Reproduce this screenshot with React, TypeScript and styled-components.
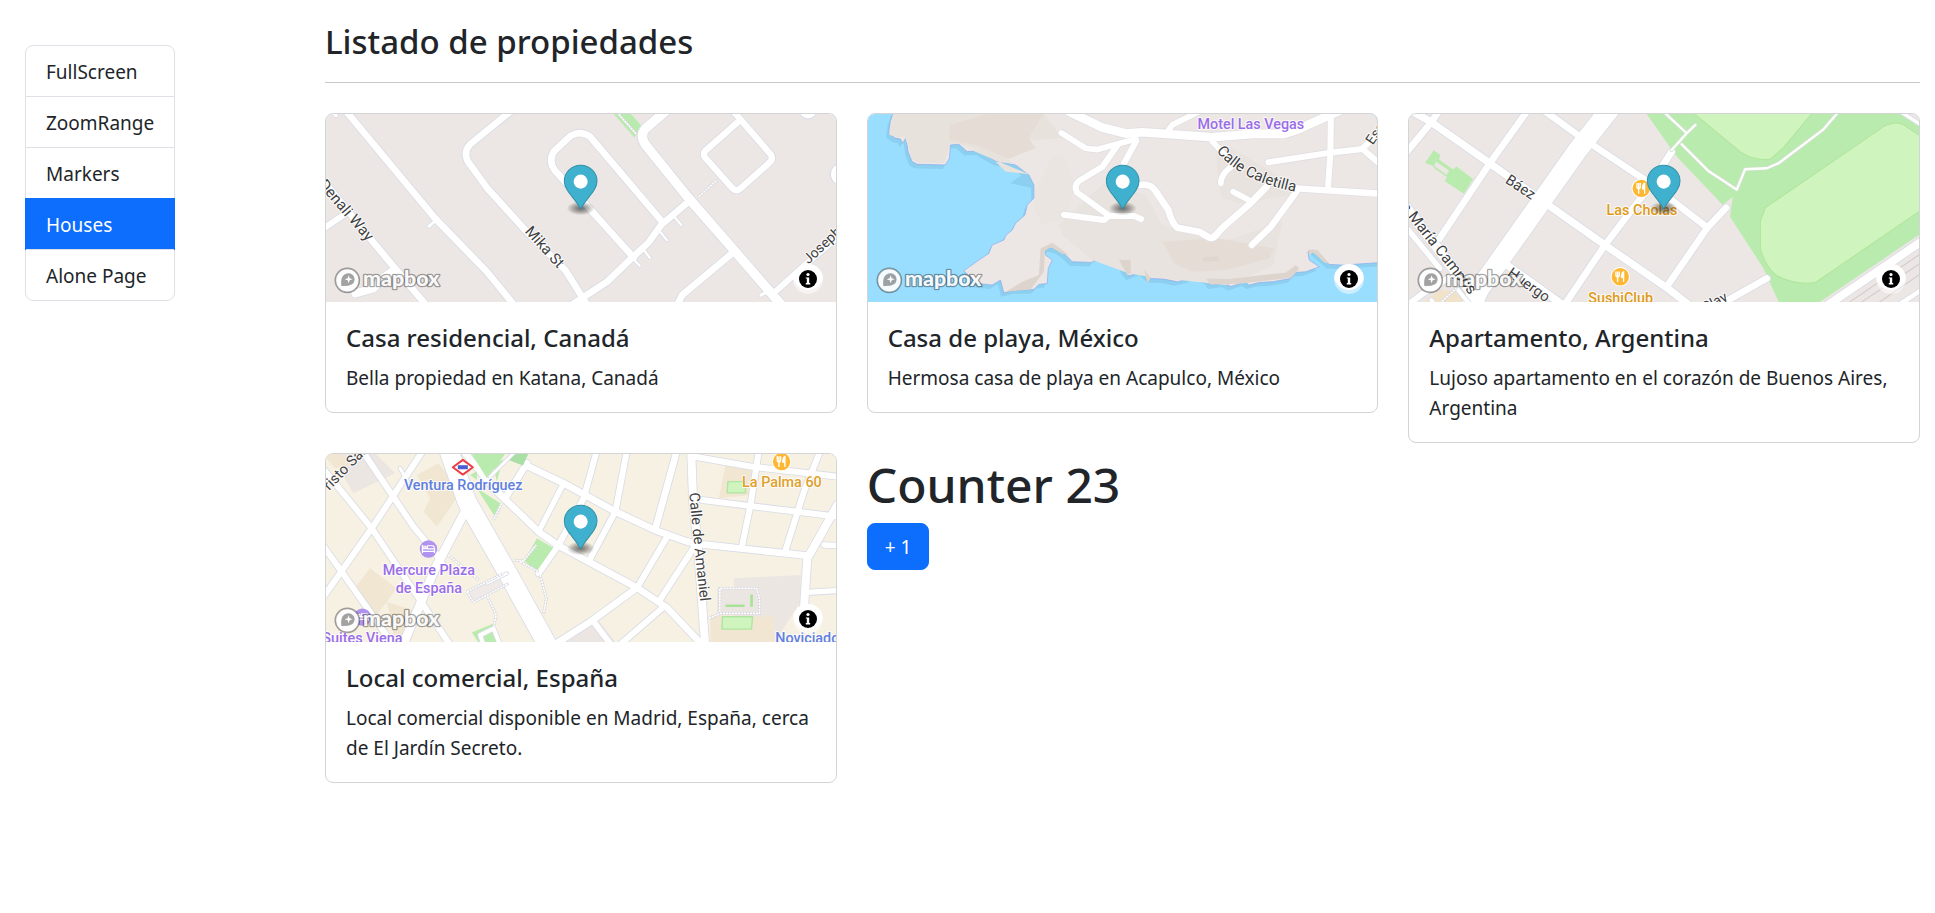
import React, { useState } from 'react';
import styled, { createGlobalStyle } from 'styled-components';

const GlobalStyle = createGlobalStyle`
  *, *::before, *::after { box-sizing: border-box; }
  body {
    margin: 0;
    background: #fff;
    color: #212529;
    font-family: 'Segoe UI', 'Noto Sans', 'Liberation Sans', sans-serif;
    font-size: 19px;
    line-height: 30px;
  }
`;

const Page = styled.div`
  display: grid;
  grid-template-columns: 310px minmax(0, 1fr);
`;

const Sidebar = styled.nav`
  padding: 45px 25px;
`;

const Menu = styled.ul`
  width: 150px;
  margin: 0;
  padding: 0;
  list-style: none;
  border: 1px solid #dee2e6;
  border-radius: 8px;
`;

const MenuItem = styled.li`
  & + & { border-top: 1px solid #dee2e6; }
`;

const MenuLink = styled.a<{ $active?: boolean }>`
  display: block;
  padding: 11px 20px 9px;
  color: ${p => (p.$active ? '#fff' : '#212529')};
  background: ${p => (p.$active ? '#0d6efd' : 'transparent')};
  box-shadow: ${p => (p.$active ? '0 0 0 1px #0d6efd' : 'none')};
  text-decoration: none;
`;

const Main = styled.main`
  padding: 21px 15px;
`;

const Title = styled.h3`
  margin: 0 0 19px;
  font-size: 33px;
  line-height: 42px;
  font-weight: 500;
`;

const Divider = styled.hr`
  height: 1px;
  margin: 0 0 30px;
  border: 0;
  background: #c8c9ca;
`;

const Grid = styled.div`
  display: grid;
  grid-template-columns: repeat(3, minmax(0, 1fr));
  gap: 10px 30px;
  align-items: start;
`;

const Card = styled.article`
  border: 1px solid #d3d4d5;
  border-radius: 8px;
  overflow: hidden;
`;

const MapFrame = styled.div`
  position: relative;
  height: 188px;
`;

const MapDrawing = styled.svg`
  display: block;
  width: 100%;
  height: 100%;
  font-family: Roboto, sans-serif;
`;

const LogoLink = styled.a`
  position: absolute;
  left: 8px;
  bottom: 8px;
  display: flex;
`;

const InfoButton = styled.button`
  position: absolute;
  right: 13px;
  bottom: 8px;
  width: 30px;
  height: 30px;
  padding: 0;
  border: 0;
  border-radius: 50%;
  overflow: hidden;
  background: rgba(255, 255, 255, 0.5);
  cursor: pointer;
  svg { display: block; }
`;

const CardBody = styled.div`
  padding: 21px 20px 19px;
`;

const CardTitle = styled.h5`
  margin: 0 0 10px;
  font-size: 24px;
  line-height: 30px;
  font-weight: 500;
`;

const CardText = styled.p`
  margin: 0;
`;

const CounterTitle = styled.h1`
  margin: 0;
  padding: 2px 0 8px;
  font-size: 48px;
  line-height: 60px;
  font-weight: 500;
`;

const PrimaryButton = styled.button`
  display: block;
  height: 47px;
  padding: 0 17px;
  border: 1px solid #0d6efd;
  border-radius: 8px;
  background: #0d6efd;
  color: #fff;
  font: inherit;
  cursor: pointer;
`;

/* ---- map drawing helpers ---- */

type Road = [d: string, width: number];

const Roads = ({ items, casing = '#d9dce6' }: { items: Road[]; casing?: string }) => (
  <g fill="none" strokeLinecap="round" strokeLinejoin="round">
    {items.map(([d, w], i) => <path key={`c${i}`} d={d} stroke={casing} strokeWidth={w + 5} />)}
    {items.map(([d, w], i) => <path key={`r${i}`} d={d} stroke="#fff" strokeWidth={w} />)}
  </g>
);

const Footpaths = ({ d }: { d: string }) => (
  <g fill="none">
    <path d={d} stroke="#d3d3dc" strokeWidth={8} />
    <path d={d} stroke="#fff" strokeWidth={5} strokeDasharray="7 2" />
  </g>
);

const halo = { stroke: '#fff', strokeOpacity: 0.8, strokeWidth: 6, strokeLinejoin: 'round', paintOrder: 'stroke' } as const;

const PlaceLabel = ({ x, y, color, children }: { x: number; y: number; color: string; children: string }) => (
  <text x={x} y={y} fill={color} fontSize={43} fontWeight={500} textAnchor="middle" {...halo}>{children}</text>
);

const StreetLabel = ({ id, d, children, size = 42 }: { id: string; d: string; children: string; size?: number }) => (
  <>
    <path id={id} d={d} fill="none" />
    <text fill="#3f3f42" fontSize={size} {...halo}><textPath href={`#${id}`}>{children}</textPath></text>
  </>
);

const FoodIcon = ({ x, y }: { x: number; y: number }) => (
  <g transform={`translate(${x} ${y})`}>
    <circle r={29} fill="#fff" />
    <circle r={26} fill="#fdb733" />
    <path d="M-8 -16V16M-13 -16V-5Q-13 1 -8 1Q-3 1 -3 -5V-16" fill="none" stroke="#fff" strokeWidth={4} />
    <path d="M10 16V-15Q3 -12 4 2H10" fill="#fff" stroke="#fff" strokeWidth={4} />
  </g>
);

const LodgingIcon = ({ x, y }: { x: number; y: number }) => (
  <g transform={`translate(${x} ${y})`}>
    <circle r={26} fill="#b193ef" />
    <path d="M-18 -12V12M-18 7H18V12M18 7V-1H-18" fill="none" stroke="#fff" strokeWidth={4} />
    <path d="M-14 -8H-7V-3H-14ZM-3 -10H12Q18 -9 18 -1H-3Z" fill="#b193ef" stroke="#fff" strokeWidth={3} />
  </g>
);

const Marker = () => (
  <g>
    <defs>
      <radialGradient id="marker-shadow">
        <stop offset="0" stopColor="#000" stopOpacity={0.55} />
        <stop offset="0.5" stopColor="#000" stopOpacity={0.3} />
        <stop offset="1" stopColor="#000" stopOpacity={0} />
      </radialGradient>
    </defs>
    <ellipse cx={781} cy={300} rx={42} ry={21} fill="url(#marker-shadow)" />
    <path
      d="M781 302C772 283 752 263 741 246C735 236 732 229 732 219A49 48 0 0 1 830 219C830 229 827 236 821 246C810 263 790 283 781 302Z"
      fill="#3fb1ce" stroke="#3291aa" strokeWidth={3}
    />
    <circle cx={781} cy={220} r={21} fill="#fff" />
  </g>
);

const canadaRoads: Road[] = [
  ['M75 5L345 330L500 490L590 600', 20],
  ['M0 205L150 390L225 480L335 610', 20],
  ['M0 368L78 315', 18],
  ['M222 484L190 508L160 540L106 555', 24],
  ['M345 338L326 354', 8],
  ['M30 5L48 22', 10],
  ['M585 -2L450 108Q430 128 442 158L500 238L610 360L735 485L810 605', 20],
  ['M940 448L800 292L705 188Q682 158 702 128L752 82Q780 66 808 84L1025 340', 20],
  ['M1110 275L1022 350L985 402L935 448L860 520L750 592', 20],
  ['M1062 325L1082 350', 7], ['M1020 372L1040 396', 7], ['M970 425L988 448', 7], ['M935 448L958 472', 7],
  ['M1055 -8L974 62Q958 82 974 108L1105 270L1240 425L1400 610', 28],
  ['M1235 5L1350 138Q1358 150 1350 160L1260 240Q1248 252 1236 240L1154 148Q1146 136 1156 126L1256 38', 19],
  ['M1238 432L1085 560L1068 595', 20],
  ['M1370 545L1470 455L1570 370', 18], ['M1355 542L1321 560', 9],
];

const CanadaMap = () => (
  <>
    <rect width={1600} height={620} fill="#ece7e4" />
    <path d="M878 15H930L966 56L942 88Z" fill="#b8ebad" />
    <Roads items={canadaRoads} />
    <circle cx={1462} cy={4} r={28} fill="#fff" stroke="#d9dce6" strokeWidth={3} />
    <circle cx={1562} cy={198} r={33} fill="#fff" stroke="#d9dce6" strokeWidth={3} />
    <Footpaths d="M895 18L948 78M1135 264L1190 216" />
    <StreetLabel id="denali" d="M-6 230L170 435" size={46}>Denali Way</StreetLabel>
    <StreetLabel id="mika" d="M612 370L740 512" size={45}>Mika St</StreetLabel>
    <StreetLabel id="joseph" d="M1464 468L1610 332">Joseph Cir</StreetLabel>
    <Marker />
  </>
);

const coast =
  'M95 10L85 40L80 75L100 90L115 92L122 105L132 88L138 130L150 160L165 168L250 170L262 150L265 110L290 108L315 130L350 128L400 158L460 170L500 200L515 230L515 270L495 290L488 320L460 345L450 365L432 380L425 395L390 410L380 435L350 455L305 487L345 525L390 530L415 515L425 553L460 545L515 543L530 528L555 525L558 480L570 455L550 440L548 425L565 418L590 425L610 440L630 460L690 462L700 448L735 446L750 435L770 448L785 485L800 503L840 488L852 500L862 510L905 512L945 520L985 510L995 500L1035 515L1045 530L1085 524L1105 534L1125 528L1145 520L1160 530L1190 522L1230 520L1285 510L1300 492L1330 490L1370 475L1340 455L1336 430L1350 425L1380 450L1400 468L1440 470L1560 462V10Z';

const mexicoRoads: Road[] = [
  ['M620 10L720 58L790 76L840 72L1050 87L1170 77L1265 77L1300 66L1430 8', 26],
  ['M1010 10L930 50L912 75', 17],
  ['M597 74L670 120L705 124L820 92', 17],
  ['M765 112L720 176L650 218Q634 232 644 252L740 322', 18],
  ['M822 98L785 165', 18],
  ['M605 319L725 335L740 323L815 323L836 332', 18],
  ['M835 230Q865 226 878 246L918 305Q928 345 945 358L1010 370L1038 386Q1052 394 1066 374L1080 358L1165 284L1212 235', 20],
  ['M1112 250L1160 276', 17],
  ['M1050 100L1115 170Q1075 195 1075 225', 17],
  ['M1300 240L1550 256', 19],
  ['M1302 250L1225 355L1168 410', 19],
  ['M1405 20L1403 140L1396 240', 18],
  ['M1218 162L1405 133L1500 122L1560 175', 18],
  ['M1500 120L1560 65', 18],
];

const MexicoMap = () => (
  <>
    <rect width={1600} height={620} fill="#99ddff" />
    <path d={coast} fill="#8ccfef" transform="translate(-8 12)" />
    <path d="M445 225L500 185L515 240Z" fill="#8ccfef" />
    <path d={coast} fill="#ece7e4" stroke="#8ba9f2" strokeWidth={2} />
    <path d="M82 80L110 88L128 84L150 150L165 162L248 164L262 108L290 106L355 126L320 122L500 198L430 190L400 160L460 168L400 130L440 100L600 90L540 10H95Z" fill="#e8e2dd" />
    <path d="M262 50L380 15H545L500 90L520 120L440 152L340 110L260 95Z" fill="#e5dcd6" />
    <path d="M560 160L600 130L640 230L610 330L540 350L515 300L520 250Z" fill="#eae5e1" />
    <path d="M690 255L730 222L850 260L900 350L1010 385L1080 400L1260 340L1230 475L1090 530L860 505L800 495L690 455L600 380L590 350Z" fill="#e8e3de" />
    <path d="M1060 130L1110 120L1300 235L1290 260L1130 285L1075 270Z" fill="#e8e3de" />
    <path d="M900 400L1060 388L1235 420L1220 450L1090 485L990 490L935 465Z" fill="#e5dcd6" />
    <path d="M1020 448L1065 443L1070 457L1022 460Z" fill="#dfd6d0" />
    <path d="M535 420L570 403L620 440L600 436L565 416L548 428L545 490L505 543L430 550L480 520L530 500ZM770 455L805 455L806 495L795 500ZM845 485L865 508L855 525ZM1030 510L1100 512L1270 492L1300 470L1310 480L1285 508L1130 526L1045 528ZM1336 424L1365 425L1400 465L1385 462L1352 432L1340 440Z" fill="#ddd4cd" />
    <Roads items={mexicoRoads} casing="#e1dfe3" />
    <PlaceLabel x={1165} y={62} color="#9a6de8">Motel Las Vegas</PlaceLabel>
    <StreetLabel id="caletilla" d="M1062 128Q1135 225 1330 256" size={45}>Calle Caletilla</StreetLabel>
    <StreetLabel id="escudo" d="M1530 112L1600 10">Escudo</StreetLabel>
    <Marker />
  </>
);

const argentinaRoads: Road[] = [
  ['M20 5L85 42L260 165L435 290L605 410L800 545L870 600', 22],
  ['M85 42L0 145', 20], ['M85 42L110 5', 20],
  ['M375 5L260 165L110 390', 20],
  ['M630 -10L520 130L230 540L190 620', 58],
  ['M420 5L530 85M565 108L740 225L912 358', 20],
  ['M805 130L735 240L605 410L480 595', 20],
  ['M968 298L912 358L790 535', 20],
  ['M0 285L250 610', 30],
  ['M0 345L90 455L110 480', 16],
  ['M305 465L480 590', 22],
  ['M1090 510L930 600', 20],
  ['M1250 605L1560 395', 24],
  ['M1470 600L1560 540', 14],
  ['M0 600L60 555L150 500', 18],
];

const ArgentinaMap = () => (
  <>
    <rect width={1600} height={620} fill="#ece7e4" />
    <path d="M40 600L110 545L180 550L240 600Z" fill="#f0e3c9" />
    <path d="M725 10H1480L1560 60V370L1235 590H1130L1080 480L980 325L988 265L958 290L820 145Z" fill="#b8ebad" />
    <path d="M865 10L1010 130Q1050 158 1100 153L1140 118L1230 10Z" fill="#d0f4bd" stroke="#b0e69b" strokeWidth={3} />
    <path d="M1086 298L1440 55Q1475 36 1500 50L1560 90V300L1236 522Q1180 532 1120 502Q1085 475 1071 420V338Z" fill="#d0f4bd" stroke="#b0e69b" strokeWidth={3} />
    <path d="M92 126L112 140L108 154L150 184L160 175L210 212L182 256L125 218L132 206L96 182L88 172L66 164Z" fill="#b8ebad" />
    <path d="M99 160L138 187L131 200L93 173Z" fill="#ece7e4" />
    <path d="M1310 600L1560 430M1345 600L1560 458M1400 600L1560 490" stroke="#d0cbca" strokeWidth={3} fill="none" />
    <Roads items={argentinaRoads} />
    <Roads items={[['M780 10L850 75L876 50M850 75L805 125M835 108L915 188L1000 244L1025 183L1090 180L1125 165L1258 65L1310 5', 7]]} casing="#cfe2cb" />
    <Roads items={[['M1490 10L1560 55', 10], ['M85 575L95 590', 12], ['M165 545L210 600', 12]]} />
    <Footpaths d="M110 585L160 540" />
    <StreetLabel id="baez" d="M304 222L420 298" size={44}>Báez</StreetLabel>
    <StreetLabel id="campos" d="M-46 250L120 458L300 690" size={46}>Luis María Campos</StreetLabel>
    <StreetLabel id="huergo" d="M310 500L460 606" size={44}>Huergo</StreetLabel>
    <StreetLabel id="clay" d="M905 612L1040 540">Clay</StreetLabel>
    <FoodIcon x={714} y={240} />
    <PlaceLabel x={716} y={319} color="#e09a17">Las Cholas</PlaceLabel>
    <FoodIcon x={651} y={505} />
    <PlaceLabel x={652} y={584} color="#e09a17">SushiClub</PlaceLabel>
    <Marker />
  </>
);

const spainRoads: Road[] = [
  ['M0 50L155 240L310 470L400 605', 18],
  ['M125 5L280 235L350 320L365 345', 18],
  ['M240 60L262 100', 9],
  ['M310 5L155 240L0 460', 18],
  ['M0 280L65 370L220 590', 18],
  ['M445 170L345 360L240 610', 26],
  ['M380 -10L440 160L560 370L690 605', 56],
  ['M415 -10L520 120L655 250L715 292L950 418L1040 478L1160 605', 20],
  ['M555 150L620 45M615 50L730 105L885 190L1010 248L1100 280L1145 288L1460 322', 20],
  ['M730 105L655 250', 16],
  ['M830 5L790 150L715 290L655 375', 18],
  ['M920 5L885 190L810 330', 18],
  ['M1070 5L1005 240', 20],
  ['M1040 265L950 418', 18],
  ['M1125 290L1015 460', 18],
  ['M950 418L810 520L700 590', 20],
  ['M1030 475L880 605', 18],
  ['M820 520L880 600', 18],
  ['M1112 5L1118 160L1135 330L1155 605', 24],
  ['M1120 25L1290 55L1550 85', 18],
  ['M1145 155L1280 172L1550 205', 18],
  ['M1315 5L1290 170L1265 290', 18],
  ['M1500 5L1450 130L1395 305', 18],
  ['M1550 170L1500 260L1460 330L1450 480', 24],
  ['M1510 290L1560 292', 16], ['M1460 432L1560 426', 16],
];

const SpainMap = () => (
  <>
    <rect width={1600} height={620} fill="#f7f1e3" />
    <path d="M30 10L60 65L100 135L225 75L160 10ZM720 590L830 510L900 600ZM1240 390L1440 380V460L1350 600H1240ZM1190 420H1320V500H1190Z" fill="#ece6e3" />
    <path d="M0 10H60L90 50L45 60ZM290 80L355 45L400 100L410 150L350 235L310 190L330 150ZM150 360L230 420L170 500L95 430ZM200 460L290 490L230 600ZM1215 50L1300 65L1290 140L1195 150ZM1170 500L1360 505V600H1170Z" fill="#f1e6d1" />
    <path d="M440 430L550 375L565 405L460 462Z" fill="#efeae8" />
    <Roads items={spainRoads} />
    <path d="M450 10H560L500 90ZM450 80L470 70V95ZM470 120L540 165L522 202ZM650 270L698 298L650 368L612 338ZM455 552L520 525L545 590H480ZM520 55L548 32L530 100Z" fill="#b8ebad" />
    <path d="M575 15H625L608 52L565 35Z" fill="#a9dfa4" />
    <path d="M1222 100H1275V134H1220ZM1206 505H1296L1293 542H1204Z" fill="#d0f4bd" stroke="#aee5a0" strokeWidth={4} />
    <Roads items={[['M480 560L520 540L540 590M480 560L490 590', 12], ['M500 405L560 375', 7], ['M510 85L580 15', 8]]} />
    <Footpaths d="M385 320L475 395M440 430L550 375M460 462L565 405M440 430L460 462M502 445L528 500L520 535M612 338L580 335M660 380L678 450L670 495M545 165L520 215M612 335L648 290M1165 510L1200 495H1317V450L1308 420H1198V490M600 340L655 370" />
    <path d="M1215 472H1272M1293 438V475" stroke="#a9e39a" strokeWidth={8} />
    <path d="M428 35L458 57L428 79L398 57Z" fill="#fff" stroke="#ee3e45" strokeWidth={6} strokeLinejoin="round" />
    <rect x={413} y={51} width={30} height={12} fill="#4a5cd0" />
    <PlaceLabel x={429} y={126} color="#5f80df">Ventura Rodríguez</PlaceLabel>
    <FoodIcon x={1383} y={40} />
    <PlaceLabel x={1384} y={117} color="#dfa12b">La Palma 60</PlaceLabel>
    <LodgingIcon x={325} y={302} />
    <PlaceLabel x={326} y={380} color="#9a6de8">Mercure Plaza</PlaceLabel>
    <PlaceLabel x={326} y={434} color="#9a6de8">de España</PlaceLabel>
    <LodgingIcon x={127} y={506} />
    <PlaceLabel x={127} y={585} color="#9a6de8">Suites Viena</PlaceLabel>
    <PlaceLabel x={1460} y={584} color="#5f80df">Noviciado</PlaceLabel>
    <StreetLabel id="cristo" d="M28 128L160 -8" size={44}>risto Santo</StreetLabel>
    <StreetLabel id="amaniel" d="M1106 134L1118 260L1146 520" size={44}>Calle de Amaniel</StreetLabel>
    <Marker />
  </>
);

const MapboxLogo = () => (
  <svg width="110" height="27" viewBox="0 0 330 81" aria-hidden="true">
    <g stroke="#000" strokeOpacity={0.36} fill="#fff">
      <circle cx={40} cy={40} r={36} strokeWidth={5} fillOpacity={0.9} />
      <text x={87} y={56} fontFamily="Lato, sans-serif" fontWeight={900} fontSize={64} strokeWidth={8} strokeLinejoin="round" paintOrder="stroke" fillOpacity={0.95}>mapbox</text>
    </g>
    <path d="M22 57Q18 20 44 19A18 18 0 0 1 62 38Q60 59 22 57Z" fill="#000" fillOpacity={0.36} />
    <path d="M44 25L47 34L56 37L47 40L44 49L41 40L32 37L41 34Z" fill="#fff" />
  </svg>
);

const InfoIcon = () => (
  <svg width="30" height="30" viewBox="0 0 30 30" aria-hidden="true">
    <circle cx={15} cy={11} r={15} fill="#fff" />
    <circle cx={15} cy={15} r={9} fill="#000" />
    <circle cx={15} cy={10.5} r={1.6} fill="#fff" />
    <path d="M12.8 13.4H16.2V19H17.2V20.4H12.8V19H13.8V14.6H12.8Z" fill="#fff" />
  </svg>
);

const properties = [
  { title: 'Casa residencial, Canadá', text: 'Bella propiedad en Katana, Canadá', Drawing: CanadaMap },
  { title: 'Casa de playa, México', text: 'Hermosa casa de playa en Acapulco, México', Drawing: MexicoMap },
  { title: 'Apartamento, Argentina', text: 'Lujoso apartamento en el corazón de Buenos Aires, Argentina', Drawing: ArgentinaMap },
  { title: 'Local comercial, España', text: 'Local comercial disponible en Madrid, España, cerca de El Jardín Secreto.', Drawing: SpainMap },
];

const links = ['FullScreen', 'ZoomRange', 'Markers', 'Houses', 'Alone Page'];

export default function App() {
  const [count, setCount] = useState(23);
  return (
    <>
      <GlobalStyle />
      <Page>
        <Sidebar>
          <Menu>
            {links.map(name => (
              <MenuItem key={name}>
                <MenuLink href="#" $active={name === 'Houses'}>{name}</MenuLink>
              </MenuItem>
            ))}
          </Menu>
        </Sidebar>
        <Main>
          <Title>Listado de propiedades</Title>
          <Divider />
          <Grid>
            {properties.map(({ title, text, Drawing }) => (
              <Card key={title}>
                <MapFrame>
                  <MapDrawing viewBox="18 17 1527 564" preserveAspectRatio="xMidYMid slice">
                    <Drawing />
                  </MapDrawing>
                  <LogoLink href="#" aria-label="Mapbox"><MapboxLogo /></LogoLink>
                  <InfoButton type="button" aria-label="Toggle attribution"><InfoIcon /></InfoButton>
                </MapFrame>
                <CardBody>
                  <CardTitle>{title}</CardTitle>
                  <CardText>{text}</CardText>
                </CardBody>
              </Card>
            ))}
            <div>
              <CounterTitle>Counter {count}</CounterTitle>
              <PrimaryButton type="button" onClick={() => setCount(count + 1)}>+ 1</PrimaryButton>
            </div>
          </Grid>
        </Main>
      </Page>
    </>
  );
}
